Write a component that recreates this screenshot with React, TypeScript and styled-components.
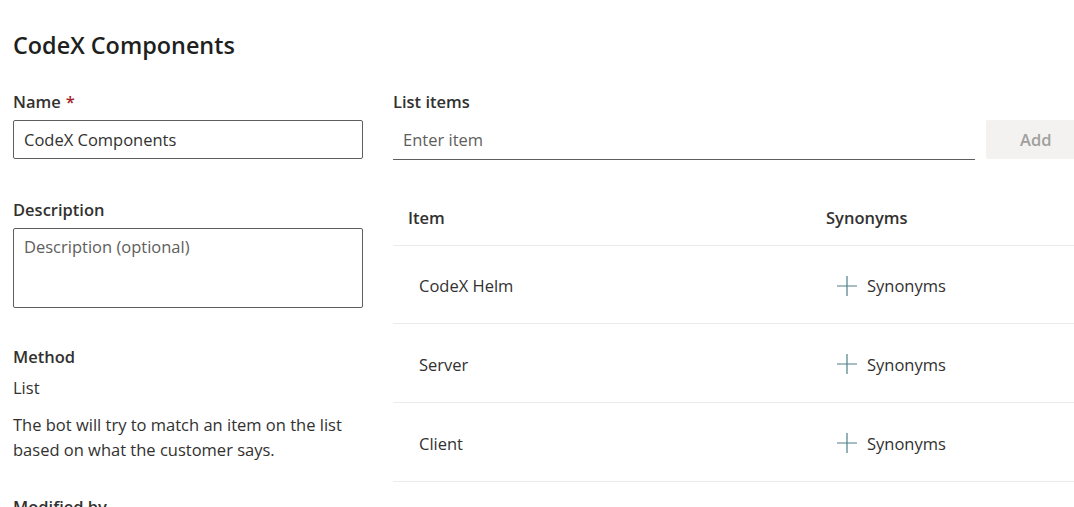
import React from "react";
import styled, { createGlobalStyle } from "styled-components";

const Global = createGlobalStyle`
  html, body { margin: 0; padding: 0; background: #ffffff; overflow: hidden; }
  body { font-family: "Open Sans", "Noto Sans", sans-serif; color: #323130; width: 1074px; height: 507px; }
  * { box-sizing: border-box; }
`;

const Page = styled.div`
  padding: 29px 0 0 13px;
  width: 1100px;
  height: 507px;
  overflow: hidden;
`;

const Title = styled.h1`
  margin: 0;
  font-size: 23.4px;
  line-height: 32px;
  font-weight: 600;
  color: #201f1e;
`;

const Main = styled.div`
  display: grid;
  grid-template-columns: 350px minmax(0, 1fr);
  column-gap: 30px;
  margin-top: 30px;
`;

const Column = styled.div`
  display: flex;
  flex-direction: column;
  min-width: 0;
`;

const Label = styled.div<{ $mt?: number }>`
  font-size: 16.5px;
  font-weight: 600;
  line-height: 22px;
  color: #323130;
  margin-top: ${(p) => p.$mt ?? 0}px;
  white-space: nowrap;
`;

const Required = styled.span`
  color: #a4262c;
  margin-left: 5px;
`;

const Field = styled.div<{ $h: number; $mt?: number }>`
  height: ${(p) => p.$h}px;
  margin-top: ${(p) => p.$mt ?? 7}px;
  border: 1px solid #605e5c;
  border-radius: 2px;
  padding: 0 10px;
  font-size: 16.5px;
  display: flex;
  align-items: ${(p) => (p.$h > 50 ? "flex-start" : "center")};
  padding-top: ${(p) => (p.$h > 50 ? 6 : 0)}px;
  color: #323130;
`;

const Placeholder = styled.span`
  color: #605e5c;
`;

const Text = styled.div<{ $mt?: number }>`
  font-size: 16.5px;
  line-height: 25px;
  color: #323130;
  margin-top: ${(p) => p.$mt ?? 0}px;
`;

const InputRow = styled.div`
  display: flex;
  gap: 11px;
  margin-top: 7px;
  height: 39px;
`;

const Underline = styled.div`
  flex: 1;
  border-bottom: 1px solid #605e5c;
  display: flex;
  align-items: center;
  padding-left: 10px;
  font-size: 16.5px;
  height: 40px;
`;

const AddButton = styled.div`
  width: 114px;
  flex: none;
  background: #f3f2f1;
  border-radius: 2px;
  color: #a19f9d;
  font-size: 16.5px;
  font-weight: 600;
  display: flex;
  align-items: center;
  padding-left: 34px;
  height: 39px;
`;

const Table = styled.div`
  margin-top: 31px;
  width: 100%;
`;

const HeaderRow = styled.div`
  display: grid;
  grid-template-columns: 418px 1fr;
  height: 56px;
  align-items: center;
  border-bottom: 1px solid #edebe9;
  font-size: 16.5px;
  font-weight: 600;
  color: #323130;
`;

const HeaderCell = styled.div`
  padding-left: 15px;
`;

const Row = styled.div`
  display: grid;
  grid-template-columns: 418px 1fr;
  height: 79px;
  padding-top: 2px;
  align-items: center;
  border-bottom: 1px solid #edebe9;
  font-size: 16.5px;
  color: #323130;
  &:nth-child(2) {
    height: 78px;
  }
`;

const ItemCell = styled.div`
  padding-left: 26px;
`;

const SynCell = styled.div`
  display: flex;
  align-items: center;
  gap: 9px;
  padding-left: 25px;
`;

const Plus = () => (
  <svg width="22" height="22" viewBox="0 0 22 22" fill="none">
    <path d="M11 1v20M1 11h20" stroke="#4e7f87" strokeWidth="1.2" />
  </svg>
);

const items = ["CodeX Helm", "Server", "Client"];

export default function App() {
  return (
    <Page>
      <Global />
      <Title>CodeX Components</Title>
      <Main>
        <Column>
          <Label>
            Name<Required>*</Required>
          </Label>
          <Field $h={39}>CodeX Components</Field>
          <Label $mt={40}>Description</Label>
          <Field $h={80}>
            <Placeholder>Description (optional)</Placeholder>
          </Field>
          <Label $mt={38}>Method</Label>
          <Text $mt={7}>List</Text>
          <Text $mt={12}>
            The bot will try to match an item on the list
            <br />
            based on what the customer says.
          </Text>
          <Label $mt={34}>Modified by</Label>
        </Column>
        <Column>
          <Label>List items</Label>
          <InputRow>
            <Underline>
              <Placeholder>Enter item</Placeholder>
            </Underline>
            <AddButton>Add</AddButton>
          </InputRow>
          <Table>
            <HeaderRow>
              <HeaderCell>Item</HeaderCell>
              <HeaderCell>Synonyms</HeaderCell>
            </HeaderRow>
            {items.map((it) => (
              <Row key={it}>
                <ItemCell>{it}</ItemCell>
                <SynCell>
                  <Plus />
                  <span>Synonyms</span>
                </SynCell>
              </Row>
            ))}
          </Table>
        </Column>
      </Main>
    </Page>
  );
}
